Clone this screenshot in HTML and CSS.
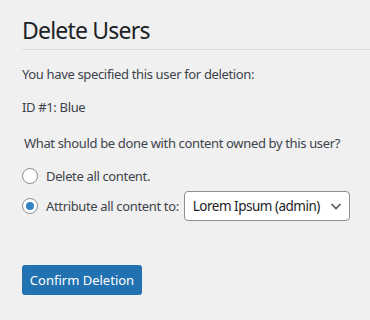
FILE: index.html
```html
<!DOCTYPE html>
<html lang="en">
<head>
    <meta charset="UTF-8">
    <meta name="viewport" content="width=device-width, initial-scale=1.0">
    <title>Delete Users</title>
    <link rel="stylesheet" href="styles.css">
</head>
<body>
    <div class="wrap">
        <h1 class="page-title">Delete Users</h1>
        <hr class="header-end">

        <p class="intro">You have specified this user for deletion:</p>
        <ul class="user-list">
            <li>ID #1: Blue</li>
        </ul>

        <fieldset class="delete-option">
            <legend>What should be done with content owned by this user?</legend>
            <ul class="option-list">
                <li>
                    <label class="option">
                        <input type="radio" name="delete_option" value="delete">
                        Delete all content.
                    </label>
                </li>
                <li>
                    <label class="option">
                        <input type="radio" name="delete_option" value="reassign" checked>
                        Attribute all content to:
                    </label>
                    <span class="select-wrap">
                        <select name="reassign_user">
                            <option>Lorem Ipsum (admin)</option>
                        </select>
                        <svg class="chevron" width="16" height="16" viewBox="0 0 16 16">
                            <path d="M3.5 6 L8 10.5 L12.5 6" fill="none" stroke="#50575e" stroke-width="1.6"/>
                        </svg>
                    </span>
                </li>
            </ul>
        </fieldset>

        <p class="submit">
            <button type="submit" class="button-primary">Confirm Deletion</button>
        </p>
    </div>
</body>
</html>
```

FILE: styles.css
```css
:root {
    --bg: #f0f0f1;
    --text: #3c434a;
    --heading: #1d2327;
    --border: #dcdcde;
    --input-border: #8c8f94;
    --primary: #2271b1;
    --radio-dot: #3582c4;
}

* {
    box-sizing: border-box;
}

body {
    margin: 0;
    background: var(--bg);
    color: var(--text);
    font-family: "Noto Sans", "Open Sans", Arial, sans-serif;
    font-size: 13px;
    line-height: 18px;
    letter-spacing: -0.35px;
}

.wrap {
    padding: 15px 0 0 22px;
}

.page-title {
    margin: 0;
    font-size: 23px;
    font-weight: 400;
    line-height: 30px;
    letter-spacing: -0.8px;
    color: var(--heading);
}

.header-end {
    margin: 4px 0 0;
    border: 0;
    border-top: 1px solid var(--border);
}

.intro {
    margin: 15px 0 0;
}

.user-list {
    list-style: none;
    margin: 15px 0 0;
    padding: 0;
}

.delete-option {
    margin: 18px 0 0;
    padding: 0;
    border: 0;
}

.delete-option legend {
    padding: 0 0 0 2px;
}

.option-list {
    list-style: none;
    margin: 9px 0 0;
    padding: 0;
}

.option-list li {
    display: flex;
    align-items: center;
    height: 30px;
}

.option {
    display: flex;
    align-items: center;
    gap: 8px;
}

.option input {
    appearance: none;
    -webkit-appearance: none;
    margin: 0;
    width: 16px;
    height: 16px;
    border: 1px solid var(--input-border);
    border-radius: 50%;
    background: #fff;
    display: grid;
    place-items: center;
}

.option input:checked::before {
    content: "";
    width: 8px;
    height: 8px;
    border-radius: 50%;
    background: var(--radio-dot);
}

.select-wrap {
    position: relative;
    margin-left: 5px;
}

.select-wrap select {
    appearance: none;
    -webkit-appearance: none;
    width: 166px;
    height: 30px;
    padding: 0 20px 0 8px;
    border: 1px solid var(--input-border);
    border-radius: 4px;
    background: #fff;
    color: var(--heading);
    font: inherit;
    font-size: 13.5px;
    letter-spacing: -0.5px;
}

.chevron {
    position: absolute;
    right: 6px;
    top: 7px;
    pointer-events: none;
}

.submit {
    margin: 44px 0 0;
}

.button-primary {
    width: 120px;
    height: 30px;
    padding: 0;
    border: 0;
    border-radius: 3px;
    background: var(--primary);
    color: #fff;
    font: inherit;
    cursor: pointer;
}
```
